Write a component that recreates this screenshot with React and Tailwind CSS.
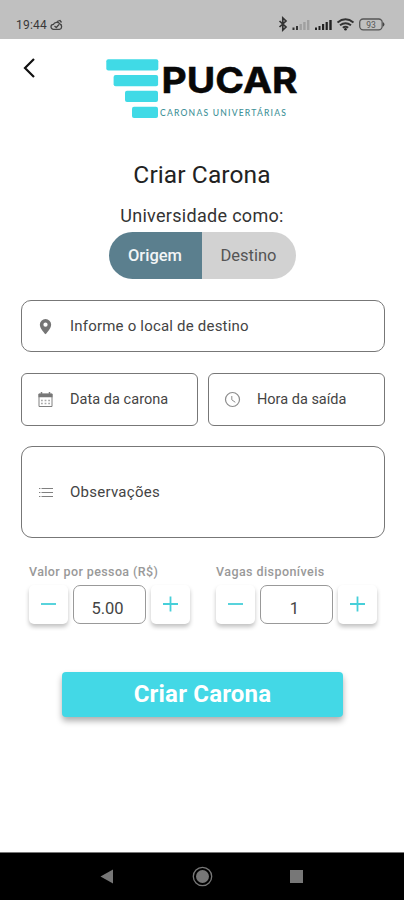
import React from "react";

function StatusBar() {
  return (
    <div className="flex h-[39px] shrink-0 items-end bg-[#c0c0c0] pb-[6px] pl-4 pr-[17px] text-[#383838]">
      <span className="text-[12px] leading-[16px] tracking-[0.2px]">19:44</span>
      <svg className="mb-[2px] ml-[3px]" width="13" height="12" viewBox="0 0 13 12" fill="none" stroke="#444" strokeWidth="1.3">
        <path d="M9.500 10.300H3.500a2.500 2.500 0 0 1 0-5C4.500 2.800 8.500 2.500 9.800 5c2.500.500 2.500 4.800-.300 5.300z" />
        <path d="M4.500 7 6.300 8.500 9 5.500M7 2.500l3-1 1.500 2" />
      </svg>
      <svg className="ml-auto" width="110" height="18" viewBox="0 0 110 18">
        <path d="M2.500 6 9 12 5.800 15V3L9 6 2.500 12" fill="none" stroke="#333" strokeWidth="1.700" />
        <g fill="#333">
          <rect x="15.500" y="12.500" width="2" height="2.500" />
          <rect x="19" y="11" width="2" height="4" />
        </g>
        <g fill="#a0a0a0">
          <rect x="22.500" y="9" width="2.400" height="6" />
          <rect x="26.200" y="7" width="2.400" height="8" />
          <rect x="30" y="5" width="2.400" height="10" />
        </g>
        <g fill="#222">
          <rect x="38" y="12.500" width="2" height="2.500" />
          <rect x="41.500" y="11" width="2" height="4" />
          <rect x="45" y="9" width="2.200" height="6" />
          <rect x="48.600" y="7" width="2.200" height="8" />
          <rect x="52.300" y="5" width="2.400" height="10" />
        </g>
        <g fill="none" stroke="#333" strokeWidth="1.900">
          <path d="M60.500 7.500q8-6.500 16 0M63 10.300q5.500-4.300 11 0M65.800 12.800q2.700-2 5.400 0" />
        </g>
        <circle cx="68.500" cy="14.300" r="1.300" fill="#222" />
        <rect x="82.700" y="4" width="22.500" height="10.800" rx="3.500" fill="none" stroke="#555" strokeWidth="1.300" />
        <path d="M106 7q3 2.400 0 4.800z" fill="#444" />
        <text x="94" y="12.500" fontSize="8.500" fill="#555" textAnchor="middle" fontFamily="Roboto, sans-serif">93</text>
      </svg>
    </div>
  );
}

function Logo() {
  return (
    <svg className="ml-[67px] mt-[20px]" width="196" height="62" viewBox="0 0 196 62">
      <g fill="#40dae6">
        <rect x="3.300" y="0.300" width="52" height="11.200" rx="2" />
        <rect x="10.600" y="16" width="44.500" height="11.200" rx="2" />
        <rect x="22" y="31.800" width="33" height="11.200" rx="2" />
        <rect x="29" y="47.800" width="26" height="11.200" rx="2" />
      </g>
      <text x="58.500" y="33.800" fontSize="36" fontWeight="700" fill="#080808" stroke="#080808" strokeWidth="0.500" fontFamily="Inter, sans-serif" textLength="136" lengthAdjust="spacingAndGlyphs">PUCAR</text>
      <text x="57" y="56.600" fontSize="8.600" fontWeight="500" fill="#3f9298" fontFamily="Lato, sans-serif" textLength="126" lengthAdjust="spacing">CARONAS UNIVERTÁRIAS</text>
    </svg>
  );
}

function Field({ icon, children, className, textClass }) {
  return (
    <div className={"flex items-center border border-[#777] pl-[15px] text-[15px] leading-[18px] text-[#444] " + className}>
      {icon}
      <span className={"ml-4 whitespace-nowrap " + textClass}>{children}</span>
    </div>
  );
}

function PinIcon() {
  return (
    <svg width="17" height="17" viewBox="0 0 24 24" className="shrink-0" fill="#757575">
      <path d="M12 1.500a8 8 0 0 0-8 8c0 5.700 8 13.500 8 13.500s8-7.800 8-13.500a8 8 0 0 0-8-8zm0 11a3 3 0 1 1 0-6 3 3 0 0 1 0 6z" />
    </svg>
  );
}

function CalendarIcon() {
  return (
    <svg width="17" height="17" viewBox="0 0 17 17" className="shrink-0" fill="none" stroke="#808080">
      <path d="M2 3h13v12.500H2z" strokeWidth="1" />
      <path d="M1.500 4.500h14" strokeWidth="3.500" stroke="#777" />
      <path d="M4.500 1v2M12.500 1v2" strokeWidth="1.500" />
      <path d="M4 9.500h9M4 12.500h9" strokeWidth="1.300" strokeDasharray="1.800 1.800" stroke="#aaa" />
    </svg>
  );
}

function ClockIcon() {
  return (
    <svg width="17" height="17" viewBox="0 0 17 17" className="shrink-0" fill="none" stroke="#8c8c8c">
      <circle cx="8.500" cy="8.500" r="7" strokeWidth="1.200" />
      <path d="M7.800 5v3.800l3.500 2.500" strokeWidth="1" />
    </svg>
  );
}

function ListIcon() {
  return (
    <svg width="17" height="17" viewBox="0 0 17 17" className="shrink-0" fill="none" stroke="#808080" strokeWidth="1">
      <path d="M4.500 4.500H16M4.500 8.500H16M4.500 12.500H16" />
      <path d="M2 4.500h1.400M2 8.500h1.400M2 12.500h1.400" />
    </svg>
  );
}

function StepButton({ plus }) {
  return (
    <button className="flex h-[39px] w-[39px] items-center justify-center rounded-[5px] bg-white shadow-[0_3px_4px_rgba(0,0,0,0.24)]">
      <svg width="17" height="17" viewBox="0 0 17 17" stroke="#46cfd9" strokeWidth="1.800" fill="none">
        <path d={plus ? "M1 8h15M8.500 .500v15" : "M1 8h15"} />
      </svg>
    </button>
  );
}

function Stepper({ label, value, labelClass, valueClass }) {
  return (
    <div className="w-[161px]">
      <div className={"whitespace-nowrap text-[12.500px] font-medium leading-[16px] text-[#999] " + labelClass}>{label}</div>
      <div className="mt-[5px] flex justify-between">
        <StepButton />
        <div className={"-ml-px flex h-[39px] w-[73px] items-center justify-center rounded-[7px] border border-[#999] pt-[8px] text-[16.500px] leading-[18px] text-[#444] " + valueClass}>
          {value}
        </div>
        <StepButton plus />
      </div>
    </div>
  );
}

export default function App() {
  return (
    <div className="flex h-[900px] w-[404px] flex-col overflow-hidden bg-white font-['Roboto',sans-serif]">
      <StatusBar />
      <header className="flex h-[121px] shrink-0 items-start pl-[22px]">
        <svg className="mt-[18px]" width="14" height="22" viewBox="0 0 14 22" fill="none" stroke="#111" strokeWidth="2.200">
          <path d="M12 2 3 11l9 9" />
        </svg>
        <Logo />
      </header>
      <main className="flex grow flex-col">
        <h1 className="text-center text-[24.500px] leading-[30px] tracking-[0.1px] text-[#222]">Criar Carona</h1>
        <p className="mt-[15px] text-center text-[18px] leading-[22px] tracking-[0.300px] text-[#333]">Universidade como:</p>
        <div className="mx-auto mt-[5px] flex h-[47px] w-[187px] overflow-hidden rounded-full text-[16.500px] font-medium leading-[47px]">
          <div className="w-[93px] bg-[#5b7f8e] text-center text-[#f2f5f6]">Origem</div>
          <div className="grow bg-[#d2d2d2] text-center font-normal text-[#555]">Destino</div>
        </div>
        <div className="flex flex-col pl-[21px] pr-[19px] pt-[21px]">
          <Field className="h-[52px] rounded-[10px]" textClass="-mt-px tracking-[0.2px]" icon={<PinIcon />}>Informe o local de destino</Field>
          <div className="mt-[21px] flex gap-[10px]">
            <Field className="h-[53px] w-[177px] rounded-[6px]" textClass="text-[14.500px] tracking-[0.040px]" icon={<CalendarIcon />}>Data da carona</Field>
            <Field className="h-[53px] w-[177px] rounded-[6px]" textClass="text-[14.500px]" icon={<ClockIcon />}>Hora da saída</Field>
          </div>
          <Field className="mt-[20px] h-[92px] rounded-[11px]" textClass="-mt-px tracking-[0.260px]" icon={<ListIcon />}>Observações</Field>
        </div>
        <div className="mt-[26px] flex gap-[26px] pl-[29px]">
          <Stepper label="Valor por pessoa (R$)" value="5.00" labelClass="tracking-[0.380px]" valueClass="pr-[3px]" />
          <Stepper label="Vagas disponíveis" value="1" labelClass="tracking-[0.430px]" valueClass="pr-[3px]" />
        </div>
        <button className="ml-[62px] mt-[48px] h-[45px] w-[281px] rounded-[4px] bg-[#43d8e6] text-[24px] font-bold leading-[45px] tracking-[0.200px] text-white shadow-[0_4px_6px_rgba(0,0,0,0.32)]">
          Criar Carona
        </button>
      </main>
      <nav className="flex h-[48px] shrink-0 items-center border-t border-[#777] bg-black">
        <svg className="ml-[100px]" width="14" height="15" viewBox="0 0 14 15" fill="#777">
          <path d="M13 .500v14L.500 7.500z" />
        </svg>
        <svg className="ml-[78px]" width="21" height="21" viewBox="0 0 21 21">
          <circle cx="10.500" cy="10.500" r="9.200" fill="none" stroke="#777" strokeWidth="1.300" />
          <circle cx="10.500" cy="10.500" r="6.500" fill="#777" />
        </svg>
        <div className="ml-[77px] h-[13px] w-[13px] bg-[#777]" />
      </nav>
    </div>
  );
}
